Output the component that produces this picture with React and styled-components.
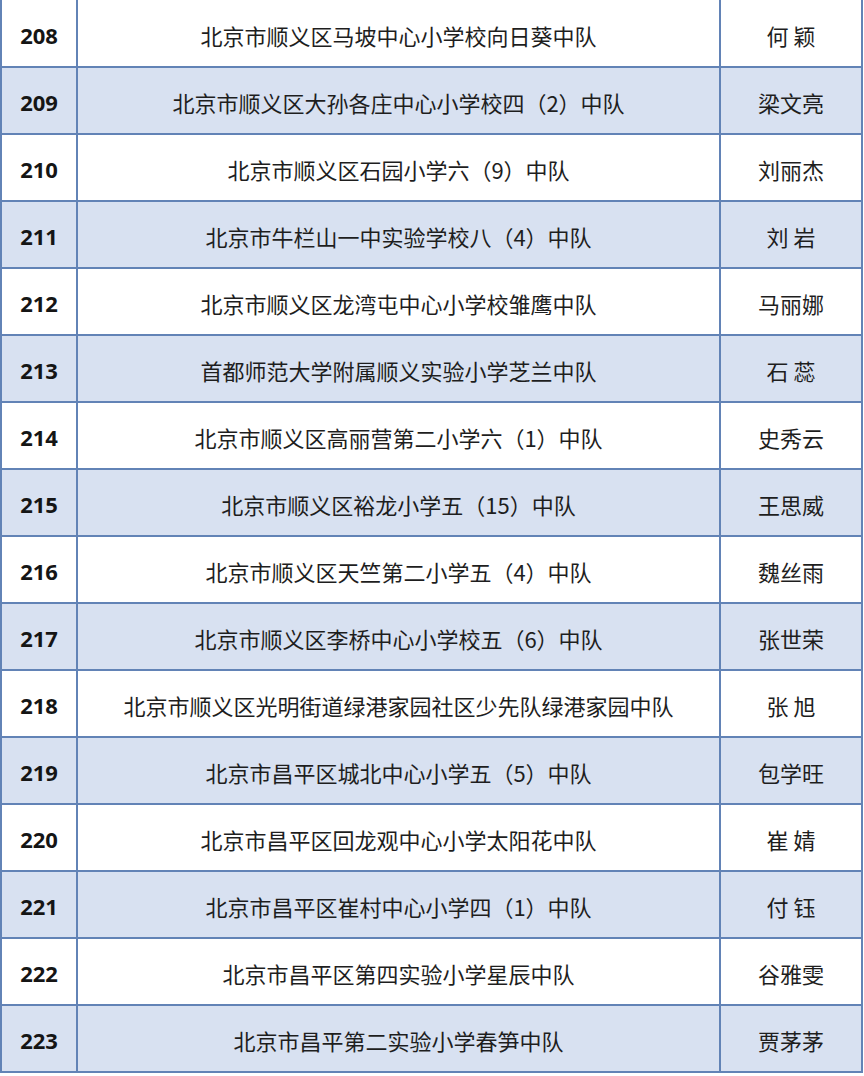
import React from 'react';
import styled, { createGlobalStyle } from 'styled-components';

const GlobalStyle = createGlobalStyle`
  html, body {
    margin: 0;
    padding: 0;
    background: #ffffff;
  }
`;

const rows = [
  ['208', '北京市顺义区马坡中心小学校向日葵中队', '何 颖'],
  ['209', '北京市顺义区大孙各庄中心小学校四（2）中队', '梁文亮'],
  ['210', '北京市顺义区石园小学六（9）中队', '刘丽杰'],
  ['211', '北京市牛栏山一中实验学校八（4）中队', '刘 岩'],
  ['212', '北京市顺义区龙湾屯中心小学校雏鹰中队', '马丽娜'],
  ['213', '首都师范大学附属顺义实验小学芝兰中队', '石 蕊'],
  ['214', '北京市顺义区高丽营第二小学六（1）中队', '史秀云'],
  ['215', '北京市顺义区裕龙小学五（15）中队', '王思威'],
  ['216', '北京市顺义区天竺第二小学五（4）中队', '魏丝雨'],
  ['217', '北京市顺义区李桥中心小学校五（6）中队', '张世荣'],
  ['218', '北京市顺义区光明街道绿港家园社区少先队绿港家园中队', '张 旭'],
  ['219', '北京市昌平区城北中心小学五（5）中队', '包学旺'],
  ['220', '北京市昌平区回龙观中心小学太阳花中队', '崔 婧'],
  ['221', '北京市昌平区崔村中心小学四（1）中队', '付 钰'],
  ['222', '北京市昌平区第四实验小学星辰中队', '谷雅雯'],
  ['223', '北京市昌平第二实验小学春笋中队', '贾茅茅'],
];

const Table = styled.table`
  width: 863px;
  border-collapse: collapse;
  table-layout: fixed;
  font-family: "Noto Sans CJK SC", "Noto Sans", sans-serif;
  color: #1e1e1e;
`;

const Row = styled.tr`
  height: 67px;
  background: ${(p) => (p.$striped ? '#d8e1f1' : '#ffffff')};
  &:first-child td {
    border-top: none;
  }
`;

const Cell = styled.td`
  border: 2px solid #6283b6;
  padding: 3px 0 0;
  text-align: center;
  vertical-align: middle;
  font-size: 22px;
  line-height: 1;
  white-space: nowrap;
`;

const NumCell = styled(Cell)`
  width: 74px;
  font-family: "Open Sans", "Liberation Sans", sans-serif;
  font-weight: 700;
  font-size: 22px;
  color: #151515;
`;

const NameCell = styled(Cell)`
  width: 641px;
`;

const PersonCell = styled(Cell)`
  width: auto;
`;

export default function App() {
  return (
    <>
      <GlobalStyle />
      <Table>
        <tbody>
          {rows.map(([num, name, person], i) => (
            <Row key={num} $striped={i % 2 === 1}>
              <NumCell>{num}</NumCell>
              <NameCell>{name}</NameCell>
              <PersonCell>{person}</PersonCell>
            </Row>
          ))}
        </tbody>
      </Table>
    </>
  );
}
